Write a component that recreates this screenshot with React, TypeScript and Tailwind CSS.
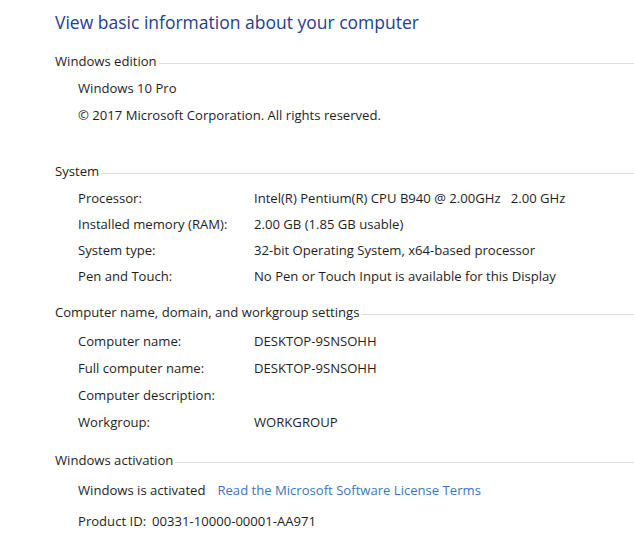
const SECTIONS_SYSTEM = [
  ["Processor:", "Intel(R) Pentium(R) CPU B940 @ 2.00GHz   2.00 GHz"],
  ["Installed memory (RAM):", "2.00 GB (1.85 GB usable)"],
  ["System type:", "32-bit Operating System, x64-based processor"],
  ["Pen and Touch:", "No Pen or Touch Input is available for this Display"],
];

const SECTIONS_NAME = [
  ["Computer name:", "DESKTOP-9SNSOHH"],
  ["Full computer name:", "DESKTOP-9SNSOHH"],
  ["Computer description:", ""],
  ["Workgroup:", "WORKGROUP"],
];

function Header({ title, className = "" }: { title: string; className?: string }) {
  return (
    <div className={`flex h-[26px] items-center pt-[2px] ${className}`}>
      <span className="whitespace-nowrap">{title}</span>
      <div className="ml-[2px] mt-[3px] h-px flex-1 bg-[#dadfe3]" />
    </div>
  );
}

function Row({ label, value, h = "h-[26px]" }: { label: string; value: string; h?: string }) {
  return (
    <div className={`flex ${h} items-center pl-[23px] pt-[3px]`}>
      <span className="w-[176px] shrink-0 whitespace-nowrap">{label}</span>
      <span className="whitespace-pre">{value}</span>
    </div>
  );
}

export default function App() {
  return (
    <div className="h-[536px] w-[634px] overflow-hidden bg-white pl-[55px] font-['Open_Sans',sans-serif] text-[13.1px] text-[#1e1e1e]">
      <h1 className="mt-[8px] h-[28px] text-[17.5px] leading-[28px] text-[#24408e]">
        View basic information about your computer
      </h1>

      <Header title="Windows edition" className="mt-[12px]" />
      <div className="flex h-[27px] items-center pl-[23px] pt-[3px]">Windows 10 Pro</div>
      <div className="flex h-[27px] items-center pl-[23px] pt-[3px]">© 2017 Microsoft Corporation. All rights reserved.</div>

      <Header title="System" className="mt-[30px]" />
      <div>
        {SECTIONS_SYSTEM.map(([l, v]) => (
          <Row key={l} label={l} value={v} />
        ))}
      </div>

      <Header title="Computer name, domain, and workgroup settings" className="mt-[11px]" />
      <div className="mt-[2px]">
        {SECTIONS_NAME.map(([l, v]) => (
          <Row key={l} label={l} value={v} h="h-[27px]" />
        ))}
      </div>

      <Header title="Windows activation" className="mt-[12px]" />
      <div className="mt-[3px] flex h-[26px] items-center pl-[23px] pt-[3px]">
        <span>Windows is activated</span>
        <a href="#" className="ml-[12px] text-[#3a76bf]">Read the Microsoft Software License Terms</a>
      </div>
      <div className="mt-[6px] flex h-[26px] items-center pl-[23px] pt-[2px]">
        <span>Product ID:</span>
        <span className="ml-[6px]">00331-10000-00001-AA971</span>
      </div>
    </div>
  );
}
